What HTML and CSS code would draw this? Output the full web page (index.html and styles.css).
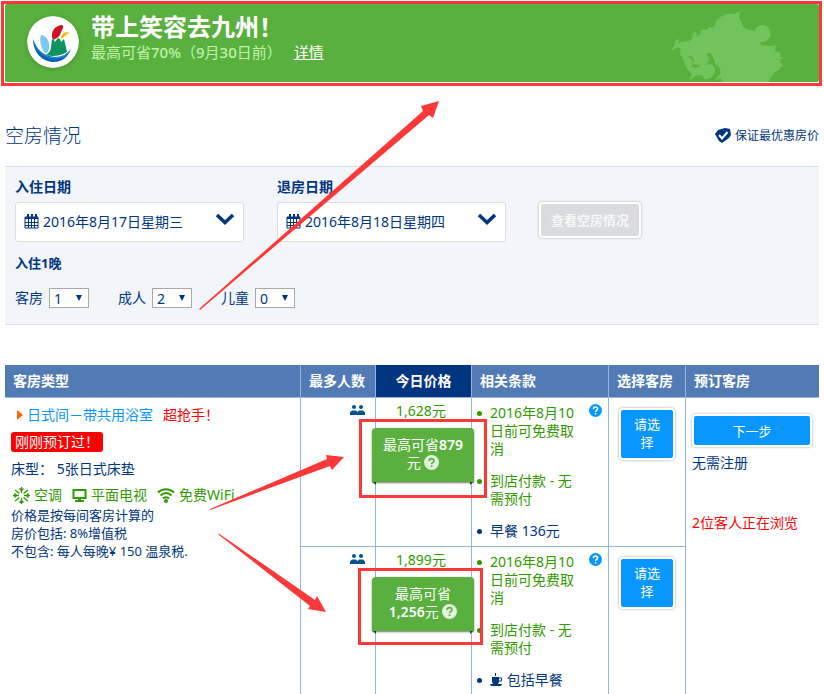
FILE: index.html
```
<!DOCTYPE html>
<html lang="zh-CN">
<head>
    <meta charset="UTF-8">
    <meta name="viewport" content="width=device-width, initial-scale=1.0">
    <title>空房情况</title>
    <link rel="stylesheet" href="styles.css">
</head>
<body>
    <svg class="symbols" width="0" height="0" aria-hidden="true">
        <symbol id="calendar" viewBox="0 0 15 15">
            <path d="M1 3h13v11H1z" fill="none" stroke="#003580" stroke-width="1"/>
            <path d="M1 3h13v2H1z" fill="#003580"/>
            <path d="M3 0h2v4H3zM7 0h2v4H7zM11 0h2v4h-2z" fill="#003580"/>
            <path d="M4.500 5v9M7.500 5v9M10.500 5v9M1 8.500h13M1 11.500h13" stroke="#003580" stroke-width="1"/>
        </symbol>
        <symbol id="chevron" viewBox="0 0 20 12">
            <path d="M2 2l8 7.500L18 2" fill="none" stroke="#003580" stroke-width="3.500"/>
        </symbol>
        <symbol id="people" viewBox="0 0 15 10">
            <circle cx="4" cy="2" r="2"/>
            <circle cx="11" cy="2" r="2"/>
            <path d="M0 10V7.500L2 5.500h4l1.500 1.500L9 5.500h4l2 2V10z"/>
        </symbol>
        <symbol id="question" viewBox="0 0 14 14">
            <circle cx="7" cy="7" r="7" fill="currentColor" stroke="none"/>
            <path d="M4.800 5.600C4.800 2.600 9.300 2.700 9.300 5.300C9.300 6.800 7.100 6.900 7.100 8.500M7.100 9.600V11.200" fill="none" stroke-width="1.600"/>
        </symbol>
    </svg>

    <div class="banner">
        <div class="banner-inner">
            <svg class="logo" viewBox="0 0 52 52" width="52" height="52">
                <circle cx="26" cy="26" r="26" fill="#fff"/>
                <path d="M14 19c6 1 9 7 8 13c0 3-1 5-4 5C14 32 12 25 14 19z" fill="#7cc8ee"/>
                <path d="M6 23c3 10 10 17 22 18c7 0 12-3 16-8c-3 8-9 13-17 13C15 46 6 36 6 23z" fill="#0b62b8"/>
                <path d="M7 26c4 10 11 16 21 16c6 0 11-2 15-7" fill="none" stroke="#2a9ade" stroke-width="1"/>
                <path d="M19 39c3-2 5-5 5-8l1-8 2 1 1 2 3-4 2 1 1 3 3-3 1 4 2 9c-6 4-15 5-21 3z" fill="#0c9360"/>
                <path d="M26 24c-3-8 1-14 9-15c2 1 1 4-1 7c-1 4-3 6-8 8z" fill="#cf1126"/>
                <path d="M34 23c0-5 4-8 9-6c-4 1-5 4-9 6z" fill="#fbb90c"/>
            </svg>
            <div class="banner-text">
                <h1>带上笑容去九州！</h1>
                <p>最高可省<b>70%</b>（<b>9</b>月<b>30</b>日前）<a href="#">详情</a></p>
            </div>
            <svg class="map" viewBox="9 12 342 213" width="114" height="71" aria-hidden="true">
                <path d="M10 126L18 118 22 102 31 95 33 102 30 112 36 106 46 104 60 103 72 97 73 84 79 73 88 80 86 90 98 82 98 72 108 66 118 68 122 60 138 62 142 52 144 42 160 28 172 22 200 20 216 14 213 30 220 44 226 60 240 68 262 72C266 46 306 48 307 80C307 96 294 106 276 105L280 114 312 118 324 114 320 132 340 138 334 150 348 150 334 160 346 178 334 180 338 186 322 194 304 216 302 225H162L160 214 140 220 152 208 158 196 154 180 142 172 138 156 128 138 118 138 116 146 124 154 120 166 108 176C130 164 144 178 140 194C136 210 124 218 110 217L102 204 84 206 64 220 72 202 58 186 50 172 44 150 36 144 38 124 24 122 18 130z"/>
                <path d="M58 148l14 0 6 10-2 14 22 2-10 8-16-2 2-20z" fill="#5ab03f"/>
            </svg>
        </div>
    </div>

    <div class="page">
        <div class="title-row">
            <h2>空房情况</h2>
            <div class="guarantee">
                <svg viewBox="0 0 16 16" width="16" height="16" aria-hidden="true">
                    <path d="M0 6L3 2 10 0 15 1 16 7 14 10 7 15 4 13z" fill="#003580"/>
                    <path d="M4 7l3 3.500L12.500 4" fill="none" stroke="#fff" stroke-width="2"/>
                </svg>
                <span>保证最优惠房价</span>
            </div>
        </div>

        <form class="search">
            <div class="dates">
                <div class="date">
                    <label for="checkin">入住日期</label>
                    <div class="date-box">
                        <svg class="calendar" width="15" height="15"><use href="#calendar"/></svg>
                        <select id="checkin"><option>2016年8月17日星期三</option></select>
                        <svg class="chevron" width="20" height="12"><use href="#chevron"/></svg>
                    </div>
                </div>
                <div class="date">
                    <label for="checkout">退房日期</label>
                    <div class="date-box">
                        <svg class="calendar" width="15" height="15"><use href="#calendar"/></svg>
                        <select id="checkout"><option>2016年8月18日星期四</option></select>
                        <svg class="chevron" width="20" height="12"><use href="#chevron"/></svg>
                    </div>
                </div>
                <button type="button" class="btn btn-check">查看空房情况</button>
            </div>
            <p class="nights">入住1晚</p>
            <div class="guests">
                <label for="rooms">客房</label>
                <span class="number"><select id="rooms"><option>1</option></select></span>
                <label for="adults">成人</label>
                <span class="number"><select id="adults"><option>2</option></select></span>
                <label for="children">儿童</label>
                <span class="number"><select id="children"><option>0</option></select></span>
            </div>
        </form>

        <table class="rooms">
            <colgroup>
                <col class="col-type">
                <col class="col-max">
                <col class="col-price">
                <col class="col-terms">
                <col class="col-select">
                <col>
            </colgroup>
            <thead>
                <tr>
                    <th>客房类型</th>
                    <th>最多人数</th>
                    <th class="today">今日价格</th>
                    <th>相关条款</th>
                    <th>选择客房</th>
                    <th>预订客房</th>
                </tr>
            </thead>
            <tbody>
                <tr>
                    <td class="type" rowspan="2">
                        <p class="name"><a href="#">日式间－带共用浴室</a><span class="hot">超抢手！</span></p>
                        <p class="badge">刚刚预订过！</p>
                        <p class="bed">床型： 5张日式床垫</p>
                        <ul class="amenities">
                            <li>
                                <svg viewBox="0 0 17 17" width="17" height="17">
                                    <path d="M8.500 0v6M8.500 11v6M0 8.500h6M11 8.500h6M2 3l4.500 3.500M15 3l-4.500 3.500M2 14l4.500-3.500M15 14l-4.500-3.500M6.500 1.500l2 2 2-2M6.500 15.500l2-2 2 2M1.500 6.500l2 2-2 2M15.500 6.500l-2 2 2 2" fill="none" stroke="#390" stroke-width="1.300"/>
                                </svg>空调
                            </li>
                            <li>
                                <svg viewBox="0 0 15 15" width="15" height="15">
                                    <path d="M1.500 2h12v8h-12z" fill="none" stroke="#390" stroke-width="2"/>
                                    <path d="M6 10h3v2h3v2H3v-2h3z" fill="#390"/>
                                </svg>平面电视
                            </li>
                            <li>
                                <svg viewBox="0 0 18 16" width="18" height="16">
                                    <path d="M1 5.500C5.500 1 12.500 1 17 5.500M3.500 8.500c3-3.200 8-3.200 11 0M6 11.500c1.500-1.700 4.500-1.700 6 0" fill="none" stroke="#390" stroke-width="2"/>
                                    <circle cx="9" cy="14" r="2" fill="#390"/>
                                </svg>免费WiFi
                            </li>
                        </ul>
                        <p class="small">价格是按每间客房计算的<br>房价包括: 8%增值税<br>不包含: 每人每晚¥ 150 温泉税.</p>
                    </td>
                    <td class="max"><svg width="15" height="10"><use href="#people"/></svg></td>
                    <td class="price">
                        <p>1,628元</p>
                        <div class="offer">最高可省<b>879</b>元 <svg class="help-light" width="15" height="15"><use href="#question"/></svg></div>
                    </td>
                    <td class="terms">
                        <svg class="help" width="13" height="13"><use href="#question"/></svg>
                        <ul>
                            <li>2016年8月10日前可免费取消</li>
                            <li>到店付款 - 无需预付</li>
                            <li class="blue">早餐 136元</li>
                        </ul>
                    </td>
                    <td class="select"><button type="button" class="btn btn-select">请选择</button></td>
                    <td class="book" rowspan="2">
                        <button type="button" class="btn btn-next">下一步</button>
                        <p>无需注册</p>
                        <p class="viewing">2位客人正在浏览</p>
                    </td>
                </tr>
                <tr>
                    <td class="max"><svg width="15" height="10"><use href="#people"/></svg></td>
                    <td class="price">
                        <p>1,899元</p>
                        <div class="offer">最高可省<b>1,256</b>元 <svg class="help-light" width="15" height="15"><use href="#question"/></svg></div>
                    </td>
                    <td class="terms">
                        <svg class="help" width="13" height="13"><use href="#question"/></svg>
                        <ul>
                            <li>2016年8月10日前可免费取消</li>
                            <li>到店付款 - 无需预付</li>
                            <li class="blue">
                                <svg viewBox="0 0 13 13" width="13" height="13">
                                    <path d="M2 4h7v5l-1 2H3L2 9zM0 11h12l-1 2H1z" fill="#003580"/>
                                    <path d="M9 5h2.500v3H9M5.500 0v3" fill="none" stroke="#003580"/>
                                </svg>
                                包括早餐
                            </li>
                        </ul>
                    </td>
                    <td class="select"><button type="button" class="btn btn-select">请选择</button></td>
                </tr>
            </tbody>
        </table>
    </div>

    <!-- red markers over the page -->
    <svg class="marks" viewBox="0 0 824 694" width="824" height="694" aria-hidden="true">
        <path d="M199 309L423 111 421 106 439 101 433 118 429 115 200 310z"/>
        <path d="M210 509L327 459 326 455 344 457 332 470 330 466 210 510z"/>
        <path d="M218 533L315 600 317 596 326 612 308 609 310 606 219 535z"/>
        <rect x="360.500" y="420.500" width="125" height="76"/>
        <rect x="359.500" y="569.500" width="122" height="74"/>
    </svg>
</body>
</html>
```
FILE: styles.css
```
* {
    box-sizing: border-box;
}
body {
    margin: 0;
    position: relative;
    color: #003580;
    font-family: "Noto Sans", "Noto Sans CJK SC", sans-serif;
    font-size: 14px;
    line-height: 18px;
    background: #fff;
}
h1, h2, p, ul {
    margin: 0;
    padding: 0;
}
select, button {
    font-family: inherit;
    color: inherit;
}
select {
    appearance: none;
    background: #fff;
}
.symbols {
    position: absolute;
}

/* banner */
.banner {
    margin: 1px 2px 0 1px;
    padding: 0 0 1px 1px;
    border: 3px solid #fd3838;
}
.banner-inner {
    display: flex;
    height: 78px;
    padding-left: 22px;
    border-radius: 2px;
    background: #5ab03f;
    color: #fff;
}
.logo {
    margin-top: 12px;
    border-radius: 50%;
    box-shadow: 0 1px 4px #47902f;
}
.banner-text {
    flex: 1;
    margin-left: 12px;
    padding-top: 10px;
}
.banner-text h1 {
    font-family: "Liberation Sans", "Noto Sans CJK SC", sans-serif;
    font-size: 24px;
    line-height: 28px;
    font-weight: bold;
}
.banner-text p {
    font-size: 15px;
    line-height: 20px;
    color: #bff5a8;
}
.banner-text b {
    font-weight: 500;
}
.banner-text a {
    margin-left: 12px;
    color: #fff;
}
.map {
    align-self: flex-end;
    margin-right: 34px;
    fill: #70c45b;
}

.page {
    padding: 0 5px;
}
.title-row {
    display: flex;
    justify-content: space-between;
    align-items: center;
    height: 80px;
    padding-top: 20px;
}
.title-row h2 {
    font-size: 19px;
    line-height: 24px;
    font-weight: 300;
}
.guarantee {
    display: flex;
    align-items: center;
    gap: 4px;
    font-size: 12px;
}

/* search form */
.search {
    height: 159px;
    padding: 10px 10px 0;
    background: #f2f5fa;
    border-top: 1px solid #d5dfee;
    border-bottom: 1px solid #d5dfee;
}
.dates {
    display: flex;
    align-items: flex-end;
}
.date {
    width: 229px;
    margin-right: 33px;
}
.date label {
    display: block;
    line-height: 20px;
    margin-bottom: 5px;
    font-weight: bold;
}
.date-box {
    position: relative;
}
.date-box select {
    display: block;
    width: 100%;
    height: 40px;
    padding: 0 27px 2px;
    border: 1px solid #ddd;
    border-radius: 3px;
    font-size: 14px;
}
.calendar {
    position: absolute;
    left: 9px;
    top: 12px;
}
.chevron {
    position: absolute;
    right: 9px;
    top: 11px;
}
.btn {
    padding: 0;
    border: 2px solid #fff;
    border-radius: 4px;
    box-shadow: 0 0 2px 1px #d4d4d4;
    background: #0896ff;
    color: #fff;
    font-size: 13px;
    line-height: 18px;
}
.btn-check {
    width: 102px;
    height: 36px;
    margin-bottom: 4px;
    background: #dadbdd;
    color: #f6f7f9;
    font-weight: bold;
}
.nights {
    margin-top: 12px;
    font-size: 13px;
    font-weight: bold;
}
.guests {
    display: flex;
    align-items: center;
    margin-top: 16px;
}
.guests label {
    margin-right: 6px;
}
.number {
    position: relative;
    margin-right: 29px;
}
.number select {
    display: block;
    width: 40px;
    height: 20px;
    padding: 0 4px 2px;
    border: 1px solid #a9a9a9;
    border-radius: 0;
    font-size: 14px;
}
.number::after {
    content: "";
    position: absolute;
    right: 7px;
    top: 7px;
    border: 3px solid transparent;
    border-top: 6px solid #003580;
    border-bottom: 0;
}

/* rooms */
.rooms {
    width: 100%;
    margin-top: 40px;
    table-layout: fixed;
    border-collapse: separate;
    border-spacing: 0;
}
.col-type { width: 296px; }
.col-max { width: 75px; }
.col-price { width: 96px; }
.col-terms { width: 137px; }
.col-select { width: 77px; }

.rooms th {
    height: 33px;
    padding: 0 0 0 8px;
    text-align: left;
    color: #fff;
    background: #527bb5;
    border-right: 1px solid #98b3dc;
    border-bottom: 1px solid #98b3dc;
    white-space: nowrap;
}
.rooms th.today {
    padding: 0;
    text-align: center;
    background: #003580;
}
.rooms td {
    padding: 0;
    vertical-align: top;
    border-right: 1px solid #98b3dc;
}
.rooms tr:first-child td {
    border-bottom: 1px solid #98b3dc;
}
.rooms th:last-child, .rooms td.book {
    border-right: 0;
}
.rooms tr:first-child td[rowspan] {
    border-bottom: 0;
}
.rooms td.type {
    padding: 8px 0 0 6px;
}
.name::before {
    content: "";
    display: inline-block;
    margin: 0 4px 0 6px;
    border: 5px solid transparent;
    border-left: 6px solid #f60;
    border-right: 0;
}
.name a {
    color: #0896ff;
    text-decoration: none;
}
.hot {
    margin-left: 10px;
    color: #f00;
}
.badge {
    width: 92px;
    margin: 8px 0;
    padding-left: 4px;
    line-height: 20px;
    border-radius: 3px;
    background: #f00;
    color: #fff;
    white-space: nowrap;
}
.amenities {
    display: flex;
    gap: 10px;
    margin-top: 8px;
    padding-left: 2px;
    list-style: none;
    color: #390;
}
.amenities li {
    display: flex;
    align-items: center;
    gap: 4px;
    white-space: nowrap;
}
.small {
    margin-top: 2px;
    font-size: 13px;
}
.max {
    text-align: right;
}
.max svg {
    display: block;
    margin: 7px 10px 0 auto;
    fill: #00568c;
}
.price {
    text-align: center;
}
.price p {
    margin-top: 4px;
    padding-right: 5px;
    color: #390;
}
.offer {
    position: relative;
    width: 102px;
    height: 54px;
    margin: 8px 0 0 -4px;
    padding: 8px 9px 0;
    border-radius: 4px 4px 0 0;
    background: #5ab03f;
    box-shadow: 0 1px 2px #777;
    color: #fff;
}
.offer b {
    font-weight: 600;
}
.offer::before, .offer::after {
    content: "";
    position: absolute;
    top: 54px;
    border-top: 3px solid #064d06;
}
.offer::before {
    left: 1px;
    border-left: 3px solid transparent;
}
.offer::after {
    right: 1px;
    border-right: 3px solid transparent;
}
.help-light {
    color: #e2f3dc;
    stroke: #5ab03f;
    vertical-align: -2px;
}
.help {
    float: right;
    margin-right: 6px;
    color: #0896ff;
    stroke: #fff;
}
.rooms td.terms {
    padding: 6px 0 6px 5px;
}
.terms ul {
    width: 100px;
    list-style: none;
}
.terms li {
    position: relative;
    padding-left: 13px;
    color: #390;
}
.terms li + li {
    margin-top: 14px;
}
.terms li::before {
    content: "";
    position: absolute;
    left: 0;
    top: 7px;
    width: 5px;
    height: 5px;
    border-radius: 50%;
    background: currentColor;
}
.terms li.blue {
    color: #003580;
}
.terms li svg {
    vertical-align: -1px;
}
.btn-select {
    display: block;
    width: 56px;
    height: 52px;
    margin: 10px 0 0 10px;
    padding: 0 12px 2px;
}
.rooms td.book {
    padding: 16px 7px 0 6px;
}
.btn-next {
    display: block;
    width: 100%;
    height: 33px;
    margin-bottom: 7px;
}
.book .viewing {
    margin-top: 42px;
    color: #f00;
}

.marks {
    position: absolute;
    left: 0;
    top: 0;
    fill: #fd3838;
    pointer-events: none;
}
.marks rect {
    fill: none;
    stroke: #fd3838;
    stroke-width: 3;
}
```
